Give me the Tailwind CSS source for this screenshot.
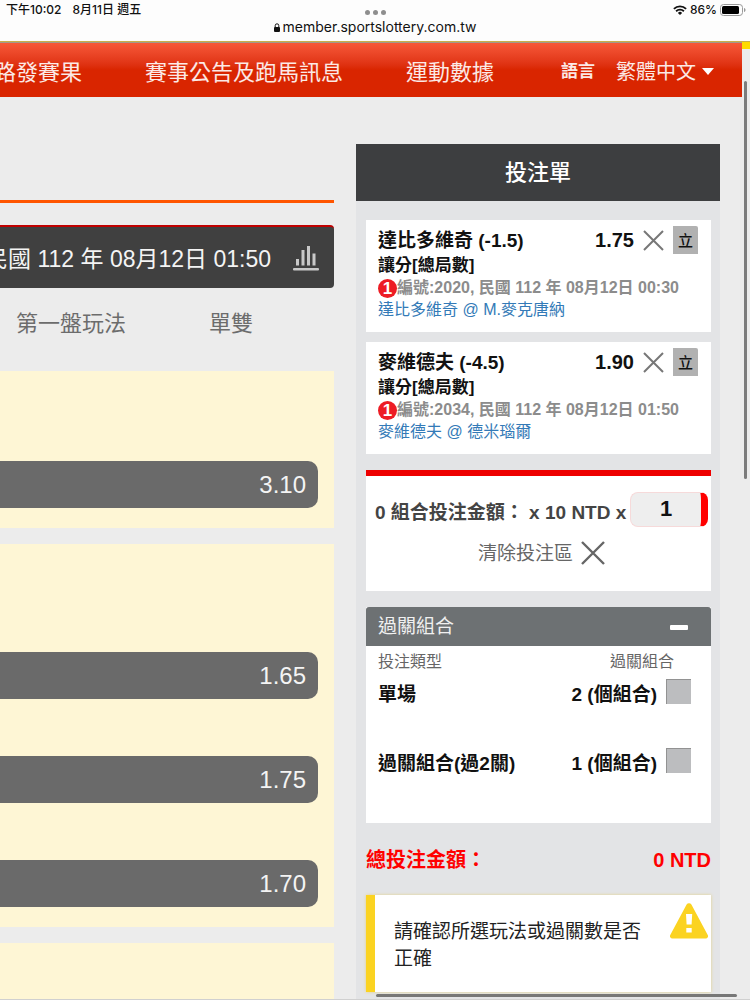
<!DOCTYPE html>
<html lang="zh-Hant">
<head>
  <meta charset="UTF-8">
  <title>投注單</title>
  <meta name="viewport" content="width=device-width, initial-scale=1" />
  <script src="https://cdn.jsdelivr.net/npm/@tailwindcss/browser@4"></script>
</head>
<body class="h-screen overflow-hidden bg-[#ececec] font-['Liberation_Sans','Noto_Sans_CJK_TC',sans-serif] text-[#111] flex flex-col relative">

  <!-- Status bar -->
  <div class="shrink-0 h-[41px] bg-[#fdfdfd] grid grid-cols-[1fr_auto_1fr] items-start font-['Inter','Noto_Sans_CJK_TC',sans-serif]">
    <div class="flex gap-[11px] pl-[6px] text-[12px] leading-5 font-medium">
      <span>下午10:02</span>
      <span>8月11日 週五</span>
    </div>
    <div class="flex flex-col items-center">
      <div class="flex gap-[3px] pt-[10px]">
        <i class="size-[5px] rounded-full bg-[#8e8e8e]"></i>
        <i class="size-[5px] rounded-full bg-[#8e8e8e]"></i>
        <i class="size-[5px] rounded-full bg-[#8e8e8e]"></i>
      </div>
      <div class="flex items-center gap-[3px] text-[14px] leading-6">
        <svg class="w-[6px] h-[9px]" viewBox="0 0 6 9"><rect y="4" width="6" height="5" rx="1" fill="#111"/><path d="M1.2 4.5V2.6a1.8 1.8 0 0 1 3.6 0v1.9" fill="none" stroke="#111" stroke-width="1"/></svg>
        <span>member.sportslottery.com.tw</span>
      </div>
    </div>
    <div class="flex items-center justify-end gap-[3px] pr-[4px] text-[12px] leading-5 font-medium">
      <svg class="w-[14px] h-[10px]" viewBox="0 0 14 10" fill="none" stroke="#111" stroke-width="1.9"><path d="M.9 3.9a8.7 8.7 0 0 1 12.2 0M3.1 6.2a5.6 5.6 0 0 1 7.8 0"/><path d="M7 10L4.9 7.9a3 3 0 0 1 4.2 0z" fill="#111" stroke="none"/></svg>
      <span>86%</span>
      <svg class="w-[26px] h-[12px]" viewBox="0 0 26 12"><rect x=".5" y=".5" width="22" height="11" rx="3" fill="none" stroke="#999"/><rect x="2" y="2" width="17" height="8" rx="1.5" fill="#000"/><path d="M24 4v4c1-.3 1.5-1 1.5-2S25 4.300 24 4z" fill="#999"/></svg>
    </div>
  </div>

  <!-- Navigation -->
  <div class="shrink-0 flex items-start border-t border-[#c9b04a]">
    <header class="flex-1 h-[55px] flex items-center border-t border-[#a39a8c] bg-linear-to-b from-[#f75838] to-[#d92500] to-50% text-white/90 whitespace-nowrap">
      <nav class="flex gap-[63px] -ml-[6px] pt-[5px] text-[22px]">
        <a href="#">路發賽果</a>
        <a href="#">賽事公告及跑馬訊息</a>
        <a href="#">運動數據</a>
      </nav>
      <div class="flex items-center ml-auto pr-[28px] pt-[3px]">
        <label for="lang" class="text-[17px] font-bold mr-[21px]">語言</label>
        <select id="lang" class="appearance-none bg-transparent text-[20px] outline-none">
          <option>繁體中文</option>
        </select>
        <svg class="w-[12px] h-[7px] ml-[6px]" viewBox="0 0 12 7"><path d="M0 0h12L6 7z" fill="#fff"/></svg>
      </div>
    </header>
    <div class="w-2 h-[7px] bg-[#ffdc00]"></div>
  </div>

  <div class="flex flex-1 min-h-0 pr-[30px]">

    <!-- Odds -->
    <main class="flex-1 min-w-0 mr-[22px] pt-[103px] flex flex-col">
      <div class="shrink-0 h-[3px] bg-[#ff5500]"></div>
      <div class="shrink-0 mt-[22px] h-[63px] rounded-r border-t-2 border-[#c00000] bg-[#404040] text-[#f4f4f4] flex items-center justify-end gap-[22px] pr-[15px] text-[23px] whitespace-nowrap overflow-hidden">
        <span class="pt-[3px]">民國 112 年 08月12日 01:50</span>
        <svg class="shrink-0 w-[26px] h-[26px]" viewBox="0 0 26 26" fill="#c9c9c9"><rect y="23" width="26" height="2.500" rx="1"/><rect x="3" y="14" width="3" height="6.500"/><rect x="8.500" y="5" width="3" height="15.500"/><rect x="14" y="1" width="3" height="19.500"/><rect x="19.500" y="8.500" width="3" height="12"/></svg>
      </div>
      <div class="shrink-0 h-[83px] pt-[19px] pl-[16px] flex gap-[83px] text-[22px] text-[#6c6c6c]">
        <span>第一盤玩法</span>
        <span>單雙</span>
      </div>

      <section class="shrink-0 bg-[#fef6d5] pr-[16px] pt-[90px] pb-[20px] flex flex-col">
        <button class="h-[47px] rounded-r-[10px] bg-[#6a6a6a] text-[#f4f4f4] text-[24px] text-right pr-[12px]">3.10</button>
      </section>
      <section class="shrink-0 mt-4 bg-[#fef6d5] pr-[16px] pt-[108px] pb-[20px] flex flex-col gap-[57px]">
        <button class="h-[47px] rounded-r-[10px] bg-[#6a6a6a] text-[#f4f4f4] text-[24px] text-right pr-[12px]">1.65</button>
        <button class="h-[47px] rounded-r-[10px] bg-[#6a6a6a] text-[#f4f4f4] text-[24px] text-right pr-[12px]">1.75</button>
        <button class="h-[47px] rounded-r-[10px] bg-[#6a6a6a] text-[#f4f4f4] text-[24px] text-right pr-[12px]">1.70</button>
      </section>
      <section class="mt-4 bg-[#fef6d5] flex-1"></section>
    </main>

    <!-- Bet slip -->
    <aside class="w-[364px] shrink-0 mt-[47px] bg-[#e3e4e6]">
      <h2 class="h-[57px] flex items-center justify-center bg-[#3d3e40] text-white text-[22px] font-medium">投注單</h2>

      <div class="pl-[10px] pr-[9px] pt-[19px]">
        <article class="bg-white h-[112px] pt-[6px] pl-[12px] pr-[13px] whitespace-nowrap">
          <div class="flex items-center h-7 font-bold mb-px">
            <h3 class="flex-1 pt-[2px] text-[19px]">達比多維奇 (-1.5)</h3>
            <span class="text-[20px]">1.75</span>
            <button aria-label="移除" class="ml-[9px]"><svg class="size-[21px]" viewBox="0 0 21 21" stroke="#777" stroke-width="2"><path d="M1 1l19 19M20 1L1 20"/></svg></button>
            <button class="ml-[9px] w-[25px] h-7 pt-[2px] rounded-tr-[2px] bg-[#b1b1b1] text-[15px] font-medium">立</button>
          </div>
          <p class="text-[17px] leading-[22px] font-bold">讓分[總局數]</p>
          <p class="text-[16px] leading-[22px] font-bold text-[#8c8c8c] flex items-center"><span class="size-[19px] rounded-full bg-[#ed1c24] text-white text-[17px] leading-[19px] text-center">1</span>編號:2020, 民國 112 年 08月12日 00:30</p>
          <a href="#" class="block text-[16px] leading-[22px] text-[#337ab7]">達比多維奇 @ M.麥克唐納</a>
        </article>

        <article class="mt-[10px] bg-white h-[112px] pt-[6px] pl-[12px] pr-[13px] whitespace-nowrap">
          <div class="flex items-center h-7 font-bold mb-px">
            <h3 class="flex-1 pt-[2px] text-[19px]">麥維德夫 (-4.5)</h3>
            <span class="text-[20px]">1.90</span>
            <button aria-label="移除" class="ml-[9px]"><svg class="size-[21px]" viewBox="0 0 21 21" stroke="#777" stroke-width="2"><path d="M1 1l19 19M20 1L1 20"/></svg></button>
            <button class="ml-[9px] w-[25px] h-7 pt-[2px] rounded-tr-[2px] bg-[#b1b1b1] text-[15px] font-medium">立</button>
          </div>
          <p class="text-[17px] leading-[22px] font-bold">讓分[總局數]</p>
          <p class="text-[16px] leading-[22px] font-bold text-[#8c8c8c] flex items-center"><span class="size-[19px] rounded-full bg-[#ed1c24] text-white text-[17px] leading-[19px] text-center">1</span>編號:2034, 民國 112 年 08月12日 01:50</p>
          <a href="#" class="block text-[16px] leading-[22px] text-[#337ab7]">麥維德夫 @ 德米瑙爾</a>
        </article>

        <section class="mt-[16px] h-[121px] border-t-[6px] border-[#ee0000] bg-white pt-[16px] pl-[9px] pr-[3px]">
          <div class="flex items-center justify-between whitespace-nowrap">
            <label for="stake" class="pt-[7px] text-[19px] leading-7 font-bold text-[#444]">0 組合投注金額： x 10 NTD x</label>
            <input id="stake" type="text" value="1" class="w-[78px] h-[35px] rounded-[8px] border border-r-[7px] border-[#f6dada] border-r-[#ff0000] bg-[#eeeeee] text-center text-[22px] font-bold pb-[2px] outline-none">
          </div>
          <button class="mt-[10px] mx-auto flex items-center gap-[8px] text-[19px] leading-7 text-[#666]"><span class="pt-[3px]">清除投注區</span>
            <svg class="size-[24px]" viewBox="0 0 24 24" stroke="#666" stroke-width="2.400"><path d="M1 1l22 22M23 1L1 23"/></svg>
          </button>
        </section>

        <section class="mt-[16px] bg-white h-[216px]">
          <button class="w-full h-[39px] rounded-t-[3px] bg-[#6d7173] text-[#f0f0f0] text-[19px] flex items-center justify-between pt-[2px] pl-[12px] pr-[23px]">過關組合
            <i class="w-[18px] h-[5px] rounded-[1px] bg-white"></i>
          </button>
          <table class="w-full">
            <thead>
              <tr class="h-[31px] text-[16px] text-[#666]">
                <th class="pl-[12px] text-left font-normal">投注類型</th>
                <th class="pr-[37px] text-right font-normal">過關組合</th>
              </tr>
            </thead>
            <tbody>
              <tr class="h-[69px] align-top text-[19px] font-bold">
                <td class="pl-[12px] pt-[4px]">單場</td>
                <td class="pr-[20px] pt-[2px]"><label class="flex justify-end gap-[9px]"><span class="pt-[2px]">2 (個組合)</span> <input type="checkbox" class="appearance-none size-[25px] bg-[#bcbdbf] border-t border-l border-[#929292]"></label></td>
              </tr>
              <tr class="h-[69px] align-top text-[19px] font-bold">
                <td class="pl-[12px] pt-[4px]">過關組合(過2關)</td>
                <td class="pr-[20px] pt-[2px]"><label class="flex justify-end gap-[9px]"><span class="pt-[2px]">1 (個組合)</span> <input type="checkbox" class="appearance-none size-[25px] bg-[#bcbdbf] border-t border-l border-[#929292]"></label></td>
              </tr>
            </tbody>
          </table>
        </section>

        <div class="h-[72px] pt-[2px] flex items-center justify-between text-[20px] font-bold text-[#ff0000]">
          <span>總投注金額：</span>
          <span>0 NTD</span>
        </div>

        <div class="h-[97px] border-l-[9px] border-[#fbd321] bg-white shadow-[0_0_3px_#e5d38a] flex justify-between items-start pl-[19px] pr-[3px]">
          <p class="w-[250px] pt-[23px] text-[19px] leading-[27px] text-[#222]">請確認所選玩法或過關數是否正確</p>
          <svg class="w-[38px] h-[36px] mt-[8px]" viewBox="0 0 38 36"><path d="M16.600 1.500a2.800 2.800 0 0 1 4.800 0l16.200 30.200a2.400 2.400 0 0 1-2.200 3.800H2.600a2.400 2.400 0 0 1-2.200-3.800z" fill="#fbd321"/><path d="M16 11h6.200l-.6 10.500h-5zM16.300 25h5.400v4.500h-5.400z" fill="#fff"/></svg>
        </div>
      </div>
    </aside>
  </div>

  <!-- Overlay scroll indicators -->
  <div class="absolute right-[3px] top-[81px] w-[3px] h-[398px] rounded-full bg-[#7c7c7c]"></div>
  <div class="absolute right-[13px] left-[376px] bottom-[3px] h-[3px] rounded-full bg-[#777777]"></div>
  <div class="absolute inset-x-0 bottom-0 h-px bg-[#d0d0d0]"></div>
</body>
</html>
